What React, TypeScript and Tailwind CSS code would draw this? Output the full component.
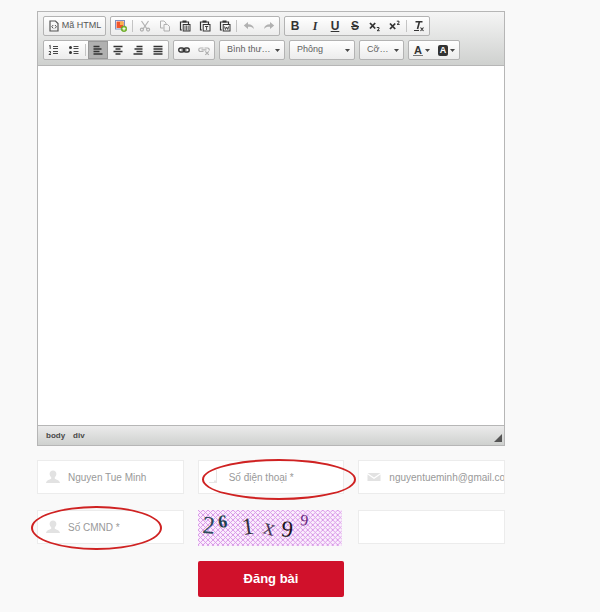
import type { ReactNode } from "react";

const ui = "font-['Liberation_Sans',Arial,sans-serif]";

/* ---------- icons ---------- */

function Icon({ children, size = 12 }: { children: ReactNode; size?: number }) {
  return (
    <svg
      width={size}
      height={size}
      viewBox="0 0 12 12"
      fill="none"
      stroke="currentColor"
      strokeWidth="1.2"
      aria-hidden="true"
      className="shrink-0"
    >
      {children}
    </svg>
  );
}

const SourceIcon = () => (
  <Icon>
    <path d="M2 1h5.500l2.500 2.500V11H2z" />
    <path d="M5.200 5L3.800 6.700l1.400 1.700M7 5l1.400 1.700L7 8.400" strokeWidth="1" />
  </Icon>
);

const ImageIcon = () => (
  <Icon>
    <rect x="0.500" y="0.500" width="9" height="8.500" fill="#fff" stroke="#7f8fc0" strokeWidth="1" />
    <rect x="1.500" y="1.500" width="7" height="6.500" fill="#f2552c" stroke="none" />
    <rect x="5" y="1.500" width="3.500" height="3.500" fill="#fbb04c" stroke="none" />
    <circle cx="9" cy="8.800" r="2.900" fill="#76b82a" stroke="#5a9a1a" strokeWidth="0.500" />
    <path d="M9 7.200v3.200M7.400 8.800h3.200" stroke="#fff" strokeWidth="1.100" />
  </Icon>
);

const CutIcon = () => (
  <Icon>
    <path d="M2.500 1l5.500 8M9.500 1L4 9" />
    <circle cx="2.900" cy="9.600" r="1.500" />
    <circle cx="9.100" cy="9.600" r="1.500" />
  </Icon>
);

const CopyIcon = () => (
  <Icon>
    <path d="M4.500 8H1.500V1H5l2 2v1" strokeWidth="1" />
    <path d="M5 4.500h3.500l2 2V11H5z" strokeWidth="1" />
  </Icon>
);

function PasteIcon({ mark }: { mark: ReactNode }) {
  return (
    <Icon>
      <path d="M3 10H1.500V2h8v2" />
      <path d="M3.500 1.500h4" strokeWidth="2" />
      <rect x="4.200" y="4.500" width="6.800" height="6.500" fill="#f6f6f6" strokeWidth="1" />
      {mark}
    </Icon>
  );
}

const UndoIcon = () => (
  <Icon>
    <path d="M5 2v2.300c3.400 0 5.500 1.500 6 4.700-1.500-1.900-3.200-2.300-6-2.200V9L.8 5.500z" fill="currentColor" stroke="none" />
  </Icon>
);

const RedoIcon = () => (
  <Icon>
    <path d="M7 2v2.300C3.600 4.300 1.500 5.800 1 9c1.500-1.900 3.200-2.300 6-2.200V9l4.200-3.500z" fill="currentColor" stroke="none" />
  </Icon>
);

const ClearIcon = () => (
  <Icon>
    <path d="M2.500 1.700h7M6.500 1.500L4.500 9" strokeWidth="1.600" />
    <path d="M1 10.500h5" strokeWidth="1" />
    <path d="M7.500 7.500l3 3.500M10.500 7.500l-3 3.500" strokeWidth="1.100" />
  </Icon>
);

const NumberedIcon = () => (
  <Icon>
    <path d="M1.200 2l1-.7V5M.8 7.500h1.700V9L1 10.500h2" strokeWidth="0.900" />
    <path d="M5 2.500h5M5 4.500h5M5 7.500h5M5 9.500h5" strokeWidth="0.900" />
  </Icon>
);

const BulletIcon = () => (
  <Icon>
    <circle cx="2.500" cy="3.500" r="1.500" fill="currentColor" stroke="none" />
    <circle cx="2.500" cy="8.500" r="1.500" fill="currentColor" stroke="none" />
    <path d="M5.500 2.500h5M5.500 4.500h5M5.500 7.500h5M5.500 9.500h5" strokeWidth="0.900" />
  </Icon>
);

function AlignIcon({ d }: { d: string }) {
  return (
    <Icon>
      <path d={d} strokeWidth="1.300" />
    </Icon>
  );
}

const LinkIcon = () => (
  <Icon>
    <rect x="0.800" y="4" width="5.200" height="4" rx="1.800" strokeWidth="1.400" />
    <rect x="6" y="4" width="5.200" height="4" rx="1.800" strokeWidth="1.400" />
    <path d="M3.500 6h5" strokeWidth="1.200" />
  </Icon>
);

const UnlinkIcon = () => (
  <Icon>
    <path d="M5.500 7.500h-3a1.700 1.700 0 010-3.500H5.500M6.500 4h3a1.700 1.700 0 011.500 2.500M3.500 5.800h5" />
    <path d="M7.300 7.300l3.500 3.500M10.800 7.300l-3.500 3.500" />
  </Icon>
);

const Caret = () => (
  <svg width="5" height="3" viewBox="0 0 5 3" aria-hidden="true" className="pointer-events-none shrink-0">
    <path d="M0 0h5L2.500 3z" fill="#474747" />
  </svg>
);

const UserIcon = () => (
  <svg width="14" height="14" viewBox="0 0 14 14" fill="#e2e2e2" aria-hidden="true">
    <path d="M7 .5c2 0 3.400 1.400 3.400 3.300 0 1.500-.7 2.800-1.600 3.500v1.500c1 .8 4.900 1.200 5.200 4.200H0c.3-3 4.200-3.400 5.200-4.200V7.300c-.9-.7-1.600-2-1.600-3.500C3.600 1.900 5 .5 7 .5z" />
  </svg>
);

const PhoneIcon = () => (
  <svg width="14" height="14" viewBox="0 0 14 14" fill="none" stroke="#e6e6e6" aria-hidden="true">
    <path d="M9.500 0v13M2 12.500h8" />
    <path d="M7 11.500h2" strokeWidth="2" />
  </svg>
);

const MailIcon = () => (
  <svg width="14" height="14" viewBox="0 0 14 14" fill="#e2e2e2" aria-hidden="true">
    <path d="M.5 3h13L7 7.500zM.5 4.500L7 9l6.500-4.500V11H.5z" />
  </svg>
);

/* ---------- toolbar ---------- */

type Tool = {
  label: string;
  icon: ReactNode;
  disabled?: boolean;
  active?: boolean;
  divider?: boolean; // line after the button
};

const groupStyle = "flex h-5 items-stretch rounded-xs border border-[#b3b3b3] bg-linear-to-b from-white to-[#ececec]";

function ToolGroup({ tools }: { tools: Tool[] }) {
  return (
    <div className={groupStyle}>
      {tools.map(t => (
        <div key={t.label} className="flex items-center">
          <button
            type="button"
            aria-label={t.label}
            aria-pressed={t.active}
            disabled={t.disabled}
            className={`flex h-full w-5 items-center justify-center text-[#333]
              ${t.active ? "bg-[#b0b0b0] ring-1 ring-inset ring-[#999]" : ""}
              ${t.disabled ? "opacity-35" : ""}`}
          >
            {t.icon}
          </button>
          {t.divider && <span className="mx-px h-3 w-0.5 border-l border-[#c4c4c4]" />}
        </div>
      ))}
    </div>
  );
}

function Combo({ label, value, width }: { label: string; value: string; width: string }) {
  return (
    <div className={`${groupStyle} relative ${width}`}>
      <select
        aria-label={label}
        className="h-full w-full appearance-none pr-3 pl-[7px] text-[9px] text-[#606060] outline-none"
      >
        <option>{value}</option>
      </select>
      <span className="pointer-events-none absolute inset-y-0 right-1 flex items-center">
        <Caret />
      </span>
    </div>
  );
}

const glyph = "text-xs leading-3 font-bold";

const clipboard: Tool[] = [
  { label: "Hình ảnh", icon: <ImageIcon />, divider: true },
  { label: "Cắt", icon: <CutIcon />, disabled: true },
  { label: "Sao chép", icon: <CopyIcon />, disabled: true },
  { label: "Dán", icon: <PasteIcon mark={<path d="M6 5.500v5M7.600 5.500v5M9.200 5.500v5" strokeWidth="0.800" />} /> },
  { label: "Dán văn bản", icon: <PasteIcon mark={<path d="M6 6.500h3.200M7.600 6.500V10" strokeWidth="0.900" />} /> },
  { label: "Dán từ Word", icon: <PasteIcon mark={<path d="M5.600 6.500l.8 3 1.200-2.500 1.200 2.500.8-3" strokeWidth="0.900" />} />, divider: true },
  { label: "Hoàn tác", icon: <UndoIcon />, disabled: true },
  { label: "Làm lại", icon: <RedoIcon />, disabled: true },
];

const styles: Tool[] = [
  { label: "Đậm", icon: <span className={glyph}>B</span> },
  { label: "Nghiêng", icon: <span className={`${glyph} font-['Liberation_Serif',serif] italic`}>I</span> },
  { label: "Gạch chân", icon: <span className={`${glyph} underline`}>U</span> },
  { label: "Gạch ngang", icon: <span className={`${glyph} line-through`}>S</span> },
  {
    label: "Chỉ số dưới",
    icon: (
      <Icon>
        <path d="M1 3l5.200 5.500M6.200 3L1 8.500" strokeWidth="1.800" />
        <path d="M7.800 7.500h2.200v1.500L8 10.700h2.700" strokeWidth="1" />
      </Icon>
    ),
  },
  {
    label: "Chỉ số trên",
    icon: (
      <Icon>
        <path d="M1 3.500L6.200 9M6.200 3.500L1 9" strokeWidth="1.800" />
        <path d="M7.800 1.200h2.200v1.500L8 4.400h2.700" strokeWidth="1" />
      </Icon>
    ),
    divider: true,
  },
  { label: "Xoá định dạng", icon: <ClearIcon /> },
];

const paragraph: Tool[] = [
  { label: "Danh sách số", icon: <NumberedIcon /> },
  { label: "Danh sách", icon: <BulletIcon />, divider: true },
  { label: "Canh trái", icon: <AlignIcon d="M1.500 2.500h6M1.500 5h8M1.500 7.500h6M1.500 10h9" />, active: true },
  { label: "Canh giữa", icon: <AlignIcon d="M1.500 2.500h9M3.500 5h5M1.500 7.500h9M3.500 10h5" /> },
  { label: "Canh phải", icon: <AlignIcon d="M4.500 2.500h6M2.500 5h8M4.500 7.500h6M1.500 10h9" /> },
  { label: "Canh đều", icon: <AlignIcon d="M1.500 2.500h9M1.500 5h9M1.500 7.500h9M1.500 10h9" /> },
];

const links: Tool[] = [
  { label: "Liên kết", icon: <LinkIcon /> },
  { label: "Bỏ liên kết", icon: <UnlinkIcon />, disabled: true },
];

function Editor() {
  return (
    <div className="flex flex-col border border-[#b6b6b6] bg-white">
      <div className="flex flex-col gap-1 border-b border-[#b6b6b6] bg-linear-to-b from-[#f5f5f5] to-[#cfd1cf] px-[5px] pt-1 pb-[5px]">
        <div className="flex flex-wrap gap-1">
          <div className={groupStyle}>
            <button type="button" className="flex w-[61px] items-center justify-center gap-0.5 whitespace-nowrap text-[9px] text-[#555]">
              <SourceIcon />
              Mã HTML
            </button>
          </div>
          <ToolGroup tools={clipboard} />
          <ToolGroup tools={styles} />
        </div>
        <div className="flex flex-wrap gap-1">
          <ToolGroup tools={paragraph} />
          <ToolGroup tools={links} />
          <Combo label="Định dạng" value="Bình thư…" width="w-[66px]" />
          <Combo label="Phông" value="Phông" width="w-[66px]" />
          <Combo label="Cỡ chữ" value="Cỡ…" width="w-[45px]" />
          <div className={groupStyle}>
            <button type="button" aria-label="Màu chữ" className="flex w-[25px] items-center justify-center gap-0.5 text-[#333]">
              <span className="border-b border-[#777] px-px text-[11px] leading-[10px] font-bold">A</span>
              <Caret />
            </button>
            <button type="button" aria-label="Màu nền" className="flex w-[25px] items-center justify-center gap-0.5">
              <span className="rounded-xs bg-[#333] px-0.5 text-[9px] leading-[11px] font-bold text-white">A</span>
              <Caret />
            </button>
          </div>
        </div>
      </div>

      <textarea aria-label="Nội dung" className="block h-[359px] w-full resize-none p-3 text-xs outline-none" />

      <div className="flex h-5 items-center gap-2 border-t border-[#b6b6b6] bg-linear-to-b from-[#ebebeb] to-[#cfd1cf] pr-0.5 pl-2 text-[8px] font-bold text-[#484848]">
        <a href="#body">body</a>
        <a href="#div">div</a>
        <svg width="8" height="8" viewBox="0 0 8 8" aria-hidden="true" className="mt-1 ml-auto">
          <path d="M8 0v8H0z" fill="#555" />
        </svg>
      </div>
    </div>
  );
}

/* ---------- form ---------- */

type FieldProps = {
  label: string;
  value?: string;
  placeholder?: string;
  type?: string;
  icon?: ReactNode;
  children?: ReactNode;
};

function Field({ label, value, placeholder, type = "text", icon, children }: FieldProps) {
  return (
    <div className="relative">
      <label className="flex h-[34px] items-center border border-[#ececec] bg-white">
        {icon && <span className="pl-2">{icon}</span>}
        <input
          type={type}
          aria-label={label}
          defaultValue={value}
          placeholder={placeholder}
          className="h-full w-full min-w-0 pl-2 text-[10px] text-[#999] outline-none placeholder:text-[#999]"
        />
      </label>
      {children}
    </div>
  );
}

function Ring({ className }: { className: string }) {
  return <span className={`pointer-events-none absolute rounded-[50%] border-2 border-[#cf2222] ${className}`} />;
}

const captcha = [
  { char: "2", x: 4, y: 23, size: 25, turn: 4, color: "#2f4a5c", weight: 400 },
  { char: "6", x: 21, y: 18, size: 18, turn: -8, color: "#1f4050", weight: 700 },
  { char: "1", x: 45, y: 25, size: 24, turn: -8, color: "#33333f", weight: 400 },
  { char: "x", x: 64, y: 23, size: 23, turn: 16, color: "#4a3a58", weight: 400 },
  { char: "9", x: 83, y: 26, size: 23, turn: 6, color: "#1c1420", weight: 400 },
  { char: "9", x: 102, y: 15, size: 16, turn: 6, color: "#6b2a80", weight: 400 },
];

function Captcha() {
  return (
    <svg role="img" aria-label="Mã xác nhận" viewBox="0 0 144 36" className="block w-[98%] overflow-visible">
      <defs>
        <pattern id="mesh" width="5" height="5" patternUnits="userSpaceOnUse">
          <rect width="5" height="5" fill="#fbeefd" />
          <path d="M0 0l5 5M5 0L0 5" stroke="#d490e4" strokeWidth="0.900" />
        </pattern>
      </defs>
      <rect width="144" height="36" fill="url(#mesh)" />
      {captcha.map(c => (
        <text
          key={c.x}
          x={c.x}
          y={c.y}
          fontSize={c.size}
          fontWeight={c.weight}
          fill={c.color}
          transform={`rotate(${c.turn} ${c.x} ${c.y})`}
          className="font-['Liberation_Serif',serif]"
        >
          {c.char}
        </text>
      ))}
    </svg>
  );
}

export default function App() {
  return (
    <main className={`min-h-screen bg-[#f9f9f9] pt-[11px] pr-[95px] pb-3 pl-[37px] ${ui}`}>
      <Editor />

      <form className="mt-3.5 flex flex-col gap-[15px]" onSubmit={e => e.preventDefault()}>
        <div className="grid grid-cols-3 gap-x-3.5 gap-y-4">
          <Field label="Họ tên" value="Nguyen Tue Minh" icon={<UserIcon />} />
          <Field label="Số điện thoại" placeholder="Số điện thoại *" type="tel" icon={<PhoneIcon />}>
            <Ring className="-top-px -right-3 -bottom-1.5 left-1" />
          </Field>
          <Field label="Email" value="nguyentueminh@gmail.com" type="email" icon={<MailIcon />} />

          <Field label="Số CMND" placeholder="Số CMND *" icon={<UserIcon />}>
            <Ring className="-top-1 right-5.5 -bottom-1 -left-1.5" />
          </Field>
          <Captcha />
          <Field label="Nhập mã xác nhận" />
        </div>

        <div className="grid grid-cols-3 gap-x-3.5">
          <button
            type="submit"
            className="col-start-2 h-9 rounded-xs bg-[#d0112b] text-[13px] font-bold text-white"
          >
            Đăng bài
          </button>
        </div>
      </form>
    </main>
  );
}
